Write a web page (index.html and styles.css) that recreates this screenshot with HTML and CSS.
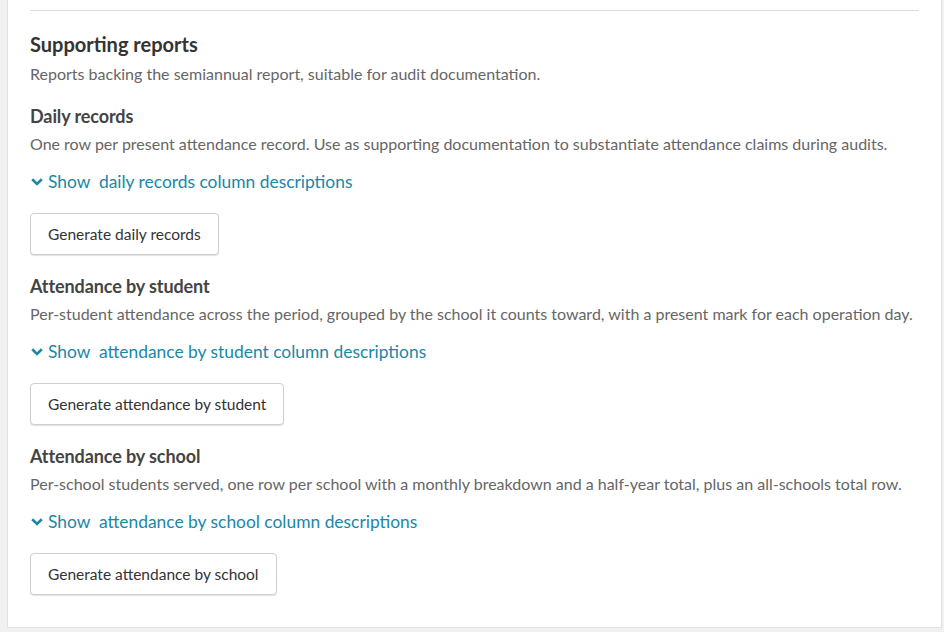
FILE: index.html
```html
<!DOCTYPE html>
<html lang="en">
<head>
<meta charset="utf-8">
<title>Supporting reports</title>
<link rel="stylesheet" href="styles.css">
</head>
<body>
<div class="page">
  <section class="card">
    <hr class="divider">
    <h2 class="title">Supporting reports</h2>
    <p class="lead">Reports backing the semiannual report, suitable for audit documentation.</p>

    <div class="report">
      <h3 class="report-name">Daily records</h3>
      <p class="report-desc">One row per present attendance record. Use as supporting documentation to substantiate attendance claims during audits.</p>
      <a class="toggle" href="#">
        <svg class="chev" viewBox="0 0 12 8" aria-hidden="true"><path d="M1.2 1.3 6 6 10.8 1.3"/></svg>
        <span>Show&nbsp; daily records column descriptions</span>
      </a>
      <button class="btn" type="button">Generate daily records</button>
    </div>

    <div class="report">
      <h3 class="report-name">Attendance by student</h3>
      <p class="report-desc">Per-student attendance across the period, grouped by the school it counts toward, with a present mark for each operation day.</p>
      <a class="toggle" href="#">
        <svg class="chev" viewBox="0 0 12 8" aria-hidden="true"><path d="M1.2 1.3 6 6 10.8 1.3"/></svg>
        <span>Show&nbsp; attendance by student column descriptions</span>
      </a>
      <button class="btn" type="button">Generate attendance by student</button>
    </div>

    <div class="report">
      <h3 class="report-name">Attendance by school</h3>
      <p class="report-desc">Per-school students served, one row per school with a monthly breakdown and a half-year total, plus an all-schools total row.</p>
      <a class="toggle" href="#">
        <svg class="chev" viewBox="0 0 12 8" aria-hidden="true"><path d="M1.2 1.3 6 6 10.8 1.3"/></svg>
        <span>Show&nbsp; attendance by school column descriptions</span>
      </a>
      <button class="btn" type="button">Generate attendance by school</button>
    </div>
  </section>
</div>
</body>
</html>
```

FILE: styles.css
```css
html, body {
  margin: 0;
  padding: 0;
  background: #f1f1f1;
}

body {
  font-family: Lato, "Open Sans", sans-serif;
  color: #333;
  height: 632px;
  overflow: hidden;
}

.page {
  padding-left: 7px;
  width: 935px;
}

.card {
  background: #fff;
  border: 1px solid #e2e2e2;
  border-top: none;
  padding: 10px 22px 32px;
}

.divider {
  margin: 0;
  border: 0;
  border-top: 1px solid #dcdcdc;
  height: 0;
}

.title {
  margin: 19px 0 0;
  font-size: 20px;
  line-height: 28px;
  font-weight: 700;
  color: #333;
}

.lead {
  margin: 5px 0 0;
  font-size: 16px;
  line-height: 22px;
  color: #666;
}

.report {
  display: flex;
  flex-direction: column;
  align-items: flex-start;
  margin-top: 19px;
}

.report-name {
  margin: 0;
  font-size: 18px;
  line-height: 24px;
  font-weight: 700;
  color: #444;
  letter-spacing: -0.1px;
}

.report-desc {
  margin: 5px 0 0;
  font-size: 16px;
  line-height: 22px;
  color: #666;
}

.toggle {
  margin-top: 15px;
  display: flex;
  align-items: center;
  gap: 5px;
  font-size: 17.4px;
  line-height: 24px;
  color: #1b87a6;
  text-decoration: none;
}

.chev {
  width: 12px;
  height: 8px;
  margin-left: 1px;
  fill: none;
  stroke: #1b87a6;
  stroke-width: 2.6;
}

.btn {
  margin-top: 19px;
  height: 42px;
  padding: 0 17px;
  font-family: inherit;
  font-size: 15.5px;
  color: #333;
  background: #fff;
  border: 1px solid #cfcfcf;
  border-radius: 4px;
  box-shadow: 0 1px 1px rgba(0, 0, 0, 0.12);
  cursor: pointer;
}
```
